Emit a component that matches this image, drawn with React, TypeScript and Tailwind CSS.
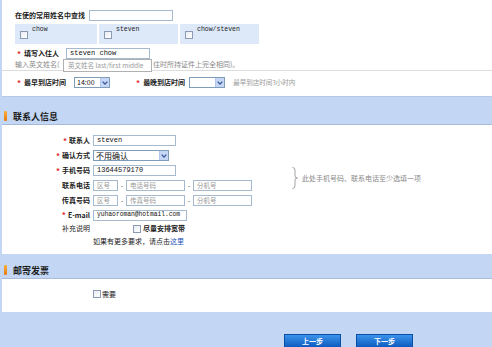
import type React from "react"

const MONO = "font-['Liberation_Mono',monospace]"

function Star() {
  return <span className="text-[#e4262b] font-bold text-[8px] leading-none">*</span>
}

function Check({ className = "" }: { className?: string }) {
  return (
    <span
      className={`inline-block w-[8px] h-[8px] border border-[#8a9bb3] bg-gradient-to-br from-[#e8ecf2] to-white ${className}`}
    />
  )
}

function TextBox({ w, value, placeholder, small = false }: { w: string; value?: string; placeholder?: string; small?: boolean }) {
  return (
    <div className={`${w} h-[11px] border border-[#a5b9cf] bg-white flex items-center pl-[3px] overflow-hidden ${value ? MONO : ""}`}>
      {value ? (
        <span className={`${small ? "text-[6.3px]" : "text-[7px]"} text-[#111] whitespace-nowrap`}>{value}</span>
      ) : (
        <span className="text-[6.5px] text-[#999]">{placeholder}</span>
      )}
    </div>
  )
}

function Select({ w, value, big = false }: { w: string; value?: string; big?: boolean }) {
  return (
    <div className={`${w} h-[11px] border border-[#7f9db9] bg-white flex items-center justify-between`}>
      <span className={`pl-[2px] ${big ? "text-[8px]" : "text-[7px]"} text-[#111]`}>{value}</span>
      <span className="w-[9px] h-full bg-[#c6d6f7] border-l border-[#b3c6ef] flex items-center justify-center">
        <svg width="6" height="4" viewBox="0 0 6 4">
          <path d="M0.6 0.6 L3 3 L5.4 0.6" stroke="#3d5a96" strokeWidth="1.3" fill="none" />
        </svg>
      </span>
    </div>
  )
}

function SectionHeader({ title, h }: { title: string; h: string }) {
  return (
    <div className={`${h} bg-[#c3d7f4] border-b border-[#a8bbdb] flex items-end pb-[3px] pl-[2px]`}>
      <span className="w-[3px] h-[10px] bg-gradient-to-b from-[#f8b03a] to-[#e67a0a] rounded-[1px]" />
      <span className="ml-[6px] text-[9px] font-bold text-[#1a1a1a]">{title}</span>
    </div>
  )
}

function NameCell({ label, w }: { label: string; w: string }) {
  return (
    <div className={`${w} h-[20px] bg-[#dde9f9] flex items-start pl-[5px] gap-[4px]`}>
      <Check className="mt-[7px]" />
      <span className={`${MONO} mt-[3px] text-[6.5px] text-[#222]`}>{label}</span>
    </div>
  )
}

function TopPanel() {
  return (
    <div className="h-[97px] bg-white border-b border-[#b6c9e6] pt-[10px]">
      <div className="flex items-center h-[11px] pl-[13px]">
        <span className="font-bold w-[74px]">在使的常用姓名中查找</span>
        <TextBox w="w-[84px]" />
      </div>
      <div className="flex gap-[2px] mt-[3px] pl-[13px]">
        <NameCell label="chow" w="w-[82px]" />
        <NameCell label="steven" w="w-[79px]" />
        <NameCell label="chow/steven" w="w-[79px]" />
      </div>
      <div className="flex items-center h-[11px] mt-[4px] pl-[15px]">
        <Star />
        <span className="ml-[3px] font-bold w-[42px]">填写入住人</span>
        <TextBox w="w-[84px]" value="steven chow" />
      </div>
      <div className="h-[12px] pl-[13px] flex items-center border-b border-[#dcdcdc] text-[#888]">
        <span className="w-[48px] whitespace-nowrap">输入英文姓名(</span>
        <div className="w-[89px] h-[13px] mt-[1px] bg-white border border-[#b0b0b0] flex items-center pl-[4px] text-[6.5px] text-[#9a9a9a]">
          英文姓名 last/first middle
        </div>
        <span className="ml-[1px]">住时所持证件上完全相同)。</span>
      </div>
      <div className="flex items-center h-[11px] mt-[6px] pl-[15px]">
        <Star />
        <span className="ml-[3px] font-bold w-[50px]">最早到店时间</span>
        <Select w="w-[36px]" value="14:00" />
        <span className="ml-[26px]">
          <Star />
        </span>
        <span className="ml-[3px] font-bold w-[46px]">最晚到店时间</span>
        <Select w="w-[36px]" />
        <span className="ml-[8px] text-[6.5px] text-[#999]">最早到店时间3小时内</span>
      </div>
    </div>
  )
}

function Row({ label, required, h = "h-[15px]", children, bold = true }: { label: string; required?: boolean; h?: string; children?: React.ReactNode; bold?: boolean }) {
  return (
    <div className={`flex items-center ${h}`}>
      <div className={`w-[91px] pr-[3px] flex justify-end items-center gap-[2px] ${bold ? "font-bold" : ""}`}>
        {required && <Star />}
        <span>{label}</span>
      </div>
      <div className="flex items-center">{children}</div>
    </div>
  )
}

function Dash() {
  return <span className="w-[8px] flex justify-center text-[#555]">-</span>
}

function ContactPanel() {
  return (
    <div className="h-[129px] bg-white pt-[8px] flex">
      <div className="w-[260px]">
        <Row label="联系人" required>
          <TextBox w="w-[83px]" value="steven" />
        </Row>
        <Row label="确认方式" required>
          <Select w="w-[76px]" value="不用确认" big />
        </Row>
        <Row label="手机号码" required>
          <TextBox w="w-[83px]" value="13644579170" />
        </Row>
        <Row label="联系电话">
          <TextBox w="w-[25px]" placeholder="区号" />
          <Dash />
          <TextBox w="w-[59px]" placeholder="电话号码" />
          <Dash />
          <TextBox w="w-[59px]" placeholder="分机号" />
        </Row>
        <Row label="传真号码">
          <TextBox w="w-[25px]" placeholder="区号" />
          <Dash />
          <TextBox w="w-[59px]" placeholder="传真号码" />
          <Dash />
          <TextBox w="w-[59px]" placeholder="分机号" />
        </Row>
        <Row label="E-mail" required h="h-[14px]">
          <TextBox w="w-[94px]" value="yuhaoroman@hotmail.com" small />
        </Row>
        <Row label="补充说明" h="h-[13px]" bold={false}>
          <Check className="ml-[40px]" />
          <span className="ml-[2px] font-bold">尽量安排宽带</span>
        </Row>
        <div className="h-[12px] pl-[91px] flex items-center">
          <span>如果有更多要求，请点击</span>
          <span className="text-[#1a4fb5]">这里</span>
        </div>
      </div>
      <div className="ml-[30px] mt-[34px] flex items-center h-[22px] gap-[4px]">
        <svg width="6" height="22" viewBox="0 0 6 22">
          <path d="M0.5 0.5 Q3 0.5 3 3 L3 9 Q3 11 5.5 11 Q3 11 3 13 L3 19 Q3 21.5 0.5 21.5" stroke="#999" strokeWidth="0.9" fill="none" />
        </svg>
        <span className="text-[#8a8a8a]">此处手机号码、联系电话至少选填一项</span>
      </div>
    </div>
  )
}

function InvoicePanel() {
  return (
    <div className="h-[33px] bg-white pt-[11px] pl-[91px] flex items-start">
      <Check />
      <span className="ml-[1px] mt-[1px]">需要</span>
    </div>
  )
}

function NavButton({ label }: { label: string }) {
  return (
    <div className="w-[57px] h-[15px] bg-gradient-to-b from-[#3a93ea] to-[#0a57be] border border-[#0b4ea6] flex items-center justify-center text-white font-bold text-[7px]">
      {label}
    </div>
  )
}

export default function App() {
  return (
    <div className="w-[492px] h-[347px] overflow-hidden bg-[#c3d7f4] pl-[2px] font-['Noto_Sans_CJK_SC',sans-serif] text-[7px] leading-none text-[#222]">
      <TopPanel />
      <SectionHeader title="联系人信息" h="h-[28px]" />
      <ContactPanel />
      <SectionHeader title="邮寄发票" h="h-[25px]" />
      <InvoicePanel />
      <div className="flex gap-[15px] pt-[22px] pl-[282px]">
        <NavButton label="上一步" />
        <NavButton label="下一步" />
      </div>
    </div>
  )
}
